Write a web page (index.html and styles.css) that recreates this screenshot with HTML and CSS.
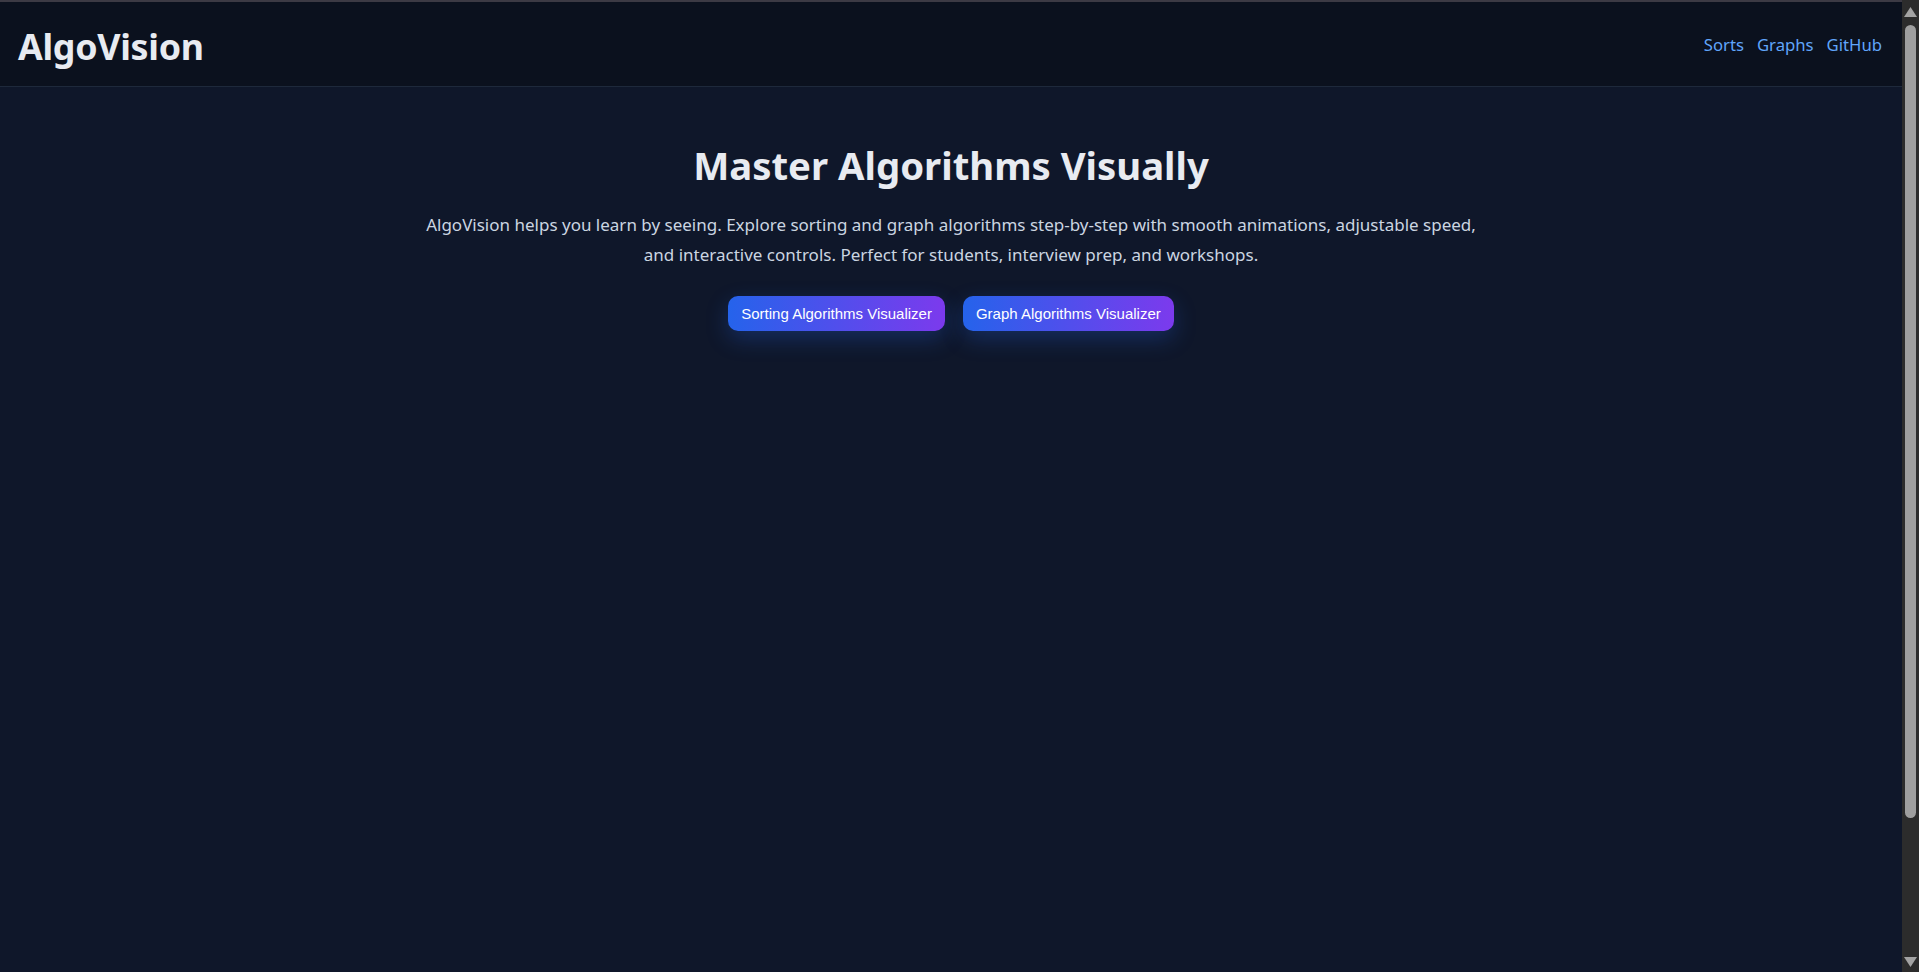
FILE: index.html
```html
<!DOCTYPE html>
<html lang="en">
<head>
<meta charset="utf-8">
<title>AlgoVision</title>
<link rel="stylesheet" href="styles.css">
</head>
<body>
<div class="viewport">
  <div class="page">
    <header class="topbar">
      <div class="brand">AlgoVision</div>
      <nav class="nav">
        <a class="nav-link" href="#">Sorts</a>
        <a class="nav-link" href="#">Graphs</a>
        <a class="nav-link" href="#">GitHub</a>
      </nav>
    </header>
    <main class="hero">
      <h1 class="hero-title">Master Algorithms Visually</h1>
      <p class="hero-text">AlgoVision helps you learn by seeing. Explore sorting and graph algorithms step-by-step with smooth animations, adjustable speed, and interactive controls. Perfect for students, interview prep, and workshops.</p>
      <div class="actions">
        <button class="btn">Sorting Algorithms Visualizer</button>
        <button class="btn">Graph Algorithms Visualizer</button>
      </div>
    </main>
  </div>
  <div class="scrollbar" aria-hidden="true">
    <svg class="sb-arrow" width="13" height="10" viewBox="0 0 13 10"><polygon points="6.5,0 13,10 0,10" fill="#a3a3a3"/></svg>
    <div class="sb-thumb"></div>
    <div class="sb-space"></div>
    <svg class="sb-arrow" width="13" height="10" viewBox="0 0 13 10"><polygon points="0,0 13,0 6.5,10" fill="#a3a3a3"/></svg>
  </div>
</div>
</body>
</html>
```
FILE: styles.css
```css
html {
  background: #0f172a;
}
body {
  margin: 0;
  background: #0f172a;
  font-family: "Segoe UI", "Noto Sans", sans-serif;
  color: #e5e7eb;
}
.viewport {
  display: flex;
  height: 100vh;
  overflow: hidden;
}
.page {
  flex: 1;
  min-width: 0;
  display: flex;
  flex-direction: column;
}
.topbar {
  display: flex;
  align-items: center;
  justify-content: space-between;
  height: 84px;
  padding: 0 20px 0 18px;
  background: #0b111e;
  border-top: 2px solid #3c3a44;
  border-bottom: 1px solid #1e293b;
  box-sizing: content-box;
  flex: none;
}
.brand {
  font-size: 35.8px;
  font-weight: 700;
  color: #e8ebf1;
  letter-spacing: -0.3px;
  padding-top: 3px;
}
.nav {
  display: flex;
  gap: 13px;
}
.nav-link {
  color: #60a5fa;
  text-decoration: none;
  font-size: 16.7px;
}
.hero {
  flex: 1;
  display: flex;
  flex-direction: column;
  align-items: center;
}
.hero-title {
  margin: 56px 0 0;
  font-size: 38.3px;
  font-weight: 700;
  color: #e8ebf1;
  line-height: 1.2;
}
.hero-text {
  margin: 21px 0 0;
  max-width: 1066px;
  text-align: center;
  font-size: 17px;
  line-height: 30.5px;
  color: #cbd5e1;
}
.actions {
  display: flex;
  gap: 18px;
  margin-top: 25px;
}
.btn {
  font-family: "Liberation Sans", Arial, sans-serif;
  font-size: 15px;
  color: #ffffff;
  padding: 0 13px;
  height: 35px;
  border: none;
  border-radius: 10px;
  background: linear-gradient(90deg, #2563eb, #7c3aed);
  box-shadow: 0 8px 22px rgba(37, 99, 235, 0.28);
  cursor: pointer;
}
.scrollbar {
  width: 17px;
  flex: none;
  background: #2c2c2c;
  display: flex;
  flex-direction: column;
  align-items: center;
  padding: 7px 0 5px;
  box-sizing: border-box;
}
.sb-arrow {
  display: block;
  flex: none;
}
.sb-thumb {
  width: 11px;
  height: 793px;
  margin-top: 8px;
  border-radius: 6px;
  background: #9f9f9f;
  flex: none;
}
.sb-space {
  flex: 1;
}
```
